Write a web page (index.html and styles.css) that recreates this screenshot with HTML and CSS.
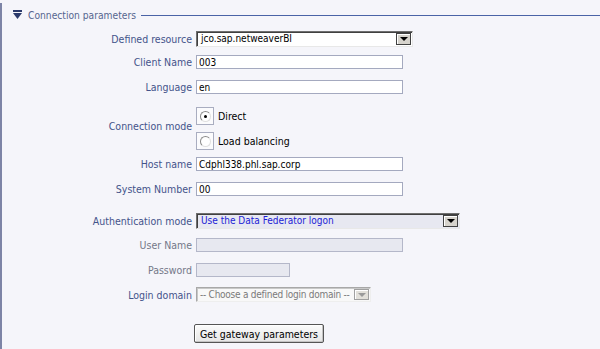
FILE: index.html
```html
<!DOCTYPE html>
<html>
<head>
<meta charset="utf-8">
<link rel="stylesheet" href="styles.css">
</head>
<body>
<div class="panel">
  <div class="header">
    <svg class="toggle" width="9" height="9" viewBox="0 0 9 9"><rect x="0" y="0" width="9" height="2" fill="#2b3a6b"/><polygon points="0,3 9,3 4.5,9" fill="#2b3a6b"/></svg>
    <span class="title">Connection parameters</span>
    <span class="rule"></span>
  </div>

  <div class="row r1">
    <span class="label">Defined resource</span>
    <div class="combo combo-res">
      <span class="combo-text">jco.sap.netweaverBI</span>
      <span class="combo-btn"><span class="arrow"></span></span>
    </div>
  </div>

  <div class="row r2">
    <span class="label">Client Name</span>
    <input class="field" type="text" value="003">
  </div>

  <div class="row r3">
    <span class="label">Language</span>
    <input class="field" type="text" value="en">
  </div>

  <div class="row r4">
    <span class="label label-radio">Connection mode</span>
    <div class="radios">
      <div class="radio-line">
        <span class="radio-box"><span class="radio checked"></span></span>
        <span class="radio-text">Direct</span>
      </div>
      <div class="radio-line">
        <span class="radio-box"><span class="radio"></span></span>
        <span class="radio-text">Load balancing</span>
      </div>
    </div>
  </div>

  <div class="row r5">
    <span class="label">Host name</span>
    <input class="field" type="text" value="Cdphl338.phl.sap.corp">
  </div>

  <div class="row r6">
    <span class="label">System Number</span>
    <input class="field" type="text" value="00">
  </div>

  <div class="row r7">
    <span class="label">Authentication mode</span>
    <div class="combo combo-auth">
      <span class="combo-text">Use the Data Federator logon</span>
      <span class="combo-btn"><span class="arrow"></span></span>
    </div>
  </div>

  <div class="row r8">
    <span class="label label-off">User Name</span>
    <input class="field field-off" type="text" disabled>
  </div>

  <div class="row r9">
    <span class="label label-off">Password</span>
    <input class="field field-off field-short" type="password" disabled>
  </div>

  <div class="row r10">
    <span class="label">Login domain</span>
    <div class="combo combo-login">
      <span class="combo-text">-- Choose a defined login domain --</span>
      <span class="combo-btn"><span class="arrow"></span></span>
    </div>
  </div>

  <div class="row r11">
    <span class="label"></span>
    <button class="btn" type="button">Get gateway parameters</button>
  </div>
</div>
</body>
</html>
```

FILE: styles.css
```css
html, body {
  margin: 0;
  padding: 0;
  background: #f5f5fa;
  height: 100%;
  overflow: hidden;
}

body {
  font-family: "DejaVu Sans Condensed", "DejaVu Sans", sans-serif;
  font-size: 10.5px;
  color: #000;
}

.panel {
  margin-top: 3px;
  height: calc(100vh - 3px);
  box-sizing: border-box;
  border-left: 2px solid #7d84a6;
}

.header {
  height: 24px;
  display: flex;
  align-items: center;
  padding-left: 11px;
}

.toggle {
  display: block;
  margin-top: -1px;
}

.title {
  margin-left: 6px;
  color: #56658f;
  font-size: 10.2px;
}

.rule {
  flex: 1;
  height: 1px;
  background: #4a63a6;
  margin-left: 5px;
}

.row {
  display: flex;
  align-items: center;
}

.r1 { margin-top: 4px; }
.r2 { margin-top: 8px; }
.r3 { margin-top: 11px; }
.r4 { margin-top: 13px; }
.r5 { margin-top: 7px; }
.r6 { margin-top: 11px; }
.r7 { margin-top: 17px; }
.r8 { margin-top: 9px; }
.r9 { margin-top: 11px; }
.r10 { margin-top: 10px; }
.r11 { margin-top: 22px; }

.label {
  flex: none;
  width: 194px;
  text-align: right;
  padding-right: 4px;
  box-sizing: border-box;
  color: #44538a;
  white-space: nowrap;
}

.label-off {
  color: #747888;
}

.label-radio {
  padding-bottom: 6px;
}

.field {
  box-sizing: border-box;
  width: 207px;
  height: 14px;
  margin: 0;
  padding: 0 2px;
  border: 1px solid #a4a9bf;
  background: #fff;
  font-family: "DejaVu Sans Condensed", "DejaVu Sans", sans-serif;
  font-size: 10px;
  color: #000;
  outline: none;
}

.field-off {
  background: #e7e8f0;
  border-color: #b4b7c9;
}

.field-short {
  width: 94px;
}

.combo {
  box-sizing: border-box;
  display: flex;
  align-items: stretch;
  height: 16px;
  background: #fff;
  border: 1px solid #6f6f6f;
  border-right-color: #e8e8e8;
  border-bottom-color: #e8e8e8;
  box-shadow: inset 1px 1px 0 #404040;
}

.combo-res {
  width: 217px;
}

.combo-auth {
  width: 264px;
  background: #e7e8f1;
}

.combo-login {
  width: 175px;
  height: 15px;
  border-color: #a8a8a8;
  border-right-color: #eee;
  border-bottom-color: #eee;
  box-shadow: inset 1px 1px 0 #c8c8c8;
  background: #f8f8f8;
}

.combo-text {
  flex: 1;
  padding-left: 4px;
  line-height: 14px;
  font-size: 10px;
  white-space: nowrap;
  overflow: hidden;
}

.combo-login .combo-text {
  line-height: 13px;
  padding-left: 3px;
  letter-spacing: -0.25px;
  color: #7a7a7a;
}

.combo-auth .combo-text {
  color: #1c1cd6;
}

.combo-btn {
  box-sizing: border-box;
  width: 15px;
  flex: none;
  margin: 1px 1px 1px 0;
  background: #d6d3cc;
  border: 1px solid #404040;
  box-shadow: inset 1px 1px 0 #ffffff;
  display: flex;
  align-items: center;
  justify-content: center;
}

.combo-login .combo-btn {
  border-color: #a0a0a0;
  background: #e2e0da;
}

.arrow {
  width: 0;
  height: 0;
  border-left: 4px solid transparent;
  border-right: 4px solid transparent;
  border-top: 4px solid #000;
}

.combo-login .arrow {
  border-top-color: #9a9a9a;
}

.radios {
  display: flex;
  flex-direction: column;
  gap: 7px;
}

.radio-line {
  display: flex;
  align-items: center;
}

.radio-box {
  box-sizing: border-box;
  width: 18px;
  height: 18px;
  border: 1px solid #a9adc0;
  background: #fbfbfd;
  display: flex;
  align-items: center;
  justify-content: center;
}

.radio {
  box-sizing: border-box;
  width: 11px;
  height: 11px;
  border-radius: 50%;
  border: 1px solid #8a8a8a;
  border-right-color: #e0e0e0;
  border-bottom-color: #e0e0e0;
  background: #fff;
  display: flex;
  align-items: center;
  justify-content: center;
}

.radio.checked::after {
  content: "";
  width: 3px;
  height: 3px;
  border-radius: 50%;
  background: #000;
}

.radio-text {
  margin-left: 4px;
  color: #000;
}

.btn {
  box-sizing: border-box;
  margin-left: -2px;
  width: 130px;
  height: 19px;
  padding: 0;
  border: 1px solid #555;
  border-radius: 2px;
  background: linear-gradient(#fbfbfb, #e6e6e6);
  box-shadow: inset -1px -1px 0 #c4c4c4, inset 1px 1px 0 #fff;
  font-family: "DejaVu Sans Condensed", "DejaVu Sans", sans-serif;
  font-size: 10.5px;
  color: #000;
}
```
